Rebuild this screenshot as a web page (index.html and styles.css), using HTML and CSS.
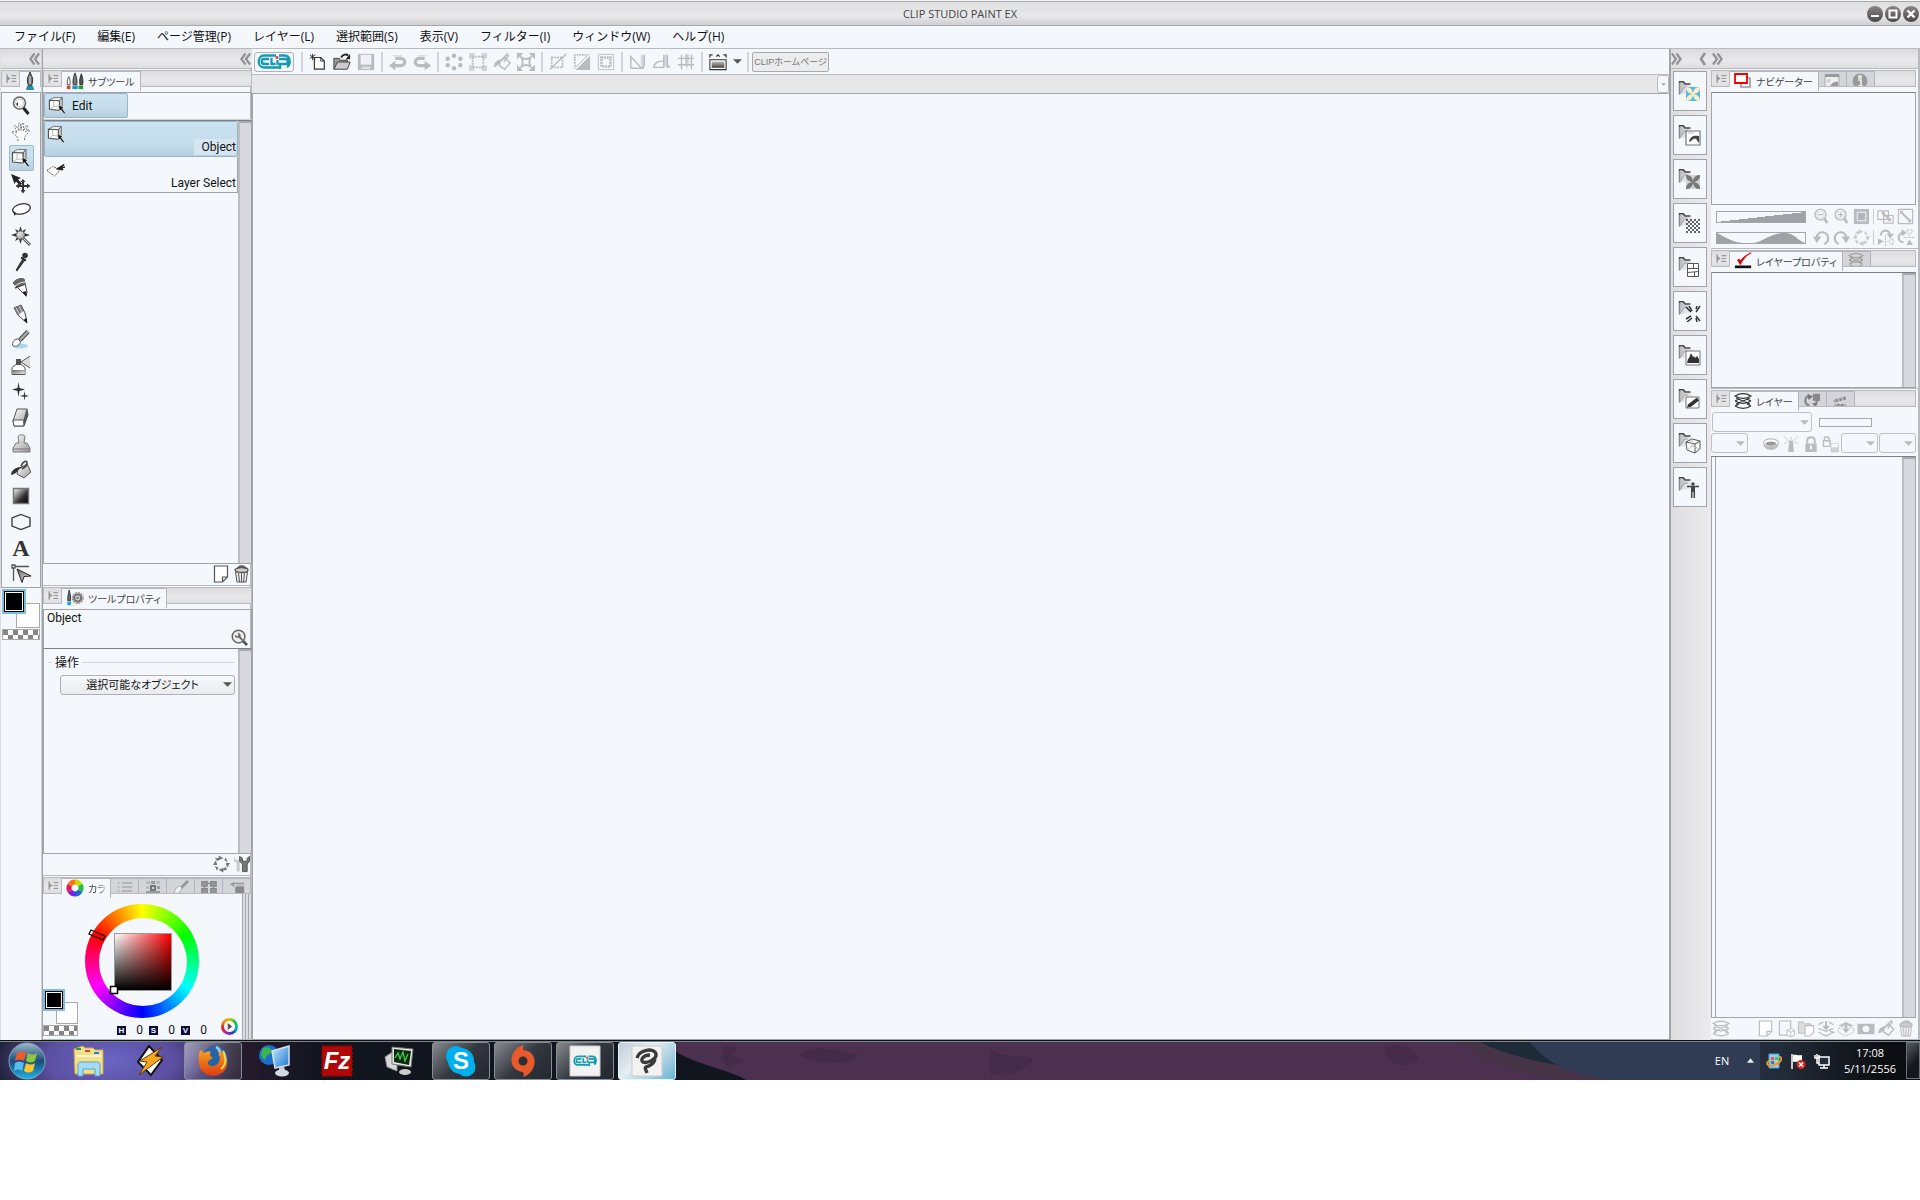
FILE: index.html
```html
<!DOCTYPE html>
<html lang="ja">
<head>
  <meta charset="UTF-8">
  <meta name="viewport" content="width=device-width, initial-scale=1.0">
  <title>CLIP STUDIO PAINT EX</title>
  <link rel="stylesheet" href="styles.css">
</head>
<body>
  <!-- Icon sprite -->
  <svg class="sprite" width="0" height="0">
    <defs>
      <linearGradient id="g-gray" x1="0" y1="0" x2="1" y2="1"><stop offset="0" stop-color="#666"/><stop offset="1" stop-color="#eee"/></linearGradient>
      <linearGradient id="g-light" x1="0" y1="0" x2="1" y2="1"><stop offset="0" stop-color="#fff"/><stop offset="1" stop-color="#999"/></linearGradient>
      <linearGradient id="g-dark" x1="0" y1="0" x2="1" y2="1"><stop offset="0" stop-color="#fff"/><stop offset=".6" stop-color="#332f2f"/><stop offset="1" stop-color="#000"/></linearGradient>
      <linearGradient id="g-window" x1="0" y1="0" x2="0" y2="1"><stop offset="0" stop-color="#bbb"/><stop offset="1" stop-color="#444"/></linearGradient>
      <linearGradient id="g-folder" x1="0" y1="0" x2="1" y2="0"><stop offset="0" stop-color="#b4b5b8"/><stop offset="1" stop-color="#f4f7fc"/></linearGradient>
      <linearGradient id="g-start" x1="0" y1="0" x2="0" y2="1"><stop offset="0" stop-color="#9fb9c8"/><stop offset=".5" stop-color="#1b4b78"/><stop offset="1" stop-color="#1fb6e8"/></linearGradient>
      <linearGradient id="g-fire" x1="0" y1="0" x2="0" y2="1"><stop offset="0" stop-color="#f7a21b"/><stop offset="1" stop-color="#dd3b14"/></linearGradient>
      <linearGradient id="g-screen" x1="0" y1="0" x2="1" y2="1"><stop offset="0" stop-color="#c8ecff"/><stop offset="1" stop-color="#1673cf"/></linearGradient>
    </defs>
    <symbol id="menu" viewBox="0 0 18 15"><path d="M5 4l4 3.500-4 3.500z" fill="#999"/><path d="M5.500 3v9M10 4.500h5M10 7.500h5M10 10.500h5" stroke="#999" stroke-width="1.300"/></symbol>
    <symbol id="collapse" viewBox="0 0 12 14"><path d="M6 1L1.500 7 6 13M11 1L6.500 7 11 13" fill="none" stroke="#929296" stroke-width="2.400"/></symbol>
    <symbol id="single" viewBox="0 0 7 14"><path d="M6 1L2 7l4 6" fill="none" stroke="#929296" stroke-width="2.600"/></symbol>
    <symbol id="down" viewBox="0 0 10 5"><path d="M0 0h10L5 5z" fill="currentColor"/></symbol>

    <symbol id="zoom" viewBox="0 0 20 20"><circle cx="8.500" cy="7" r="6" fill="#fff" stroke="#666" stroke-width="1.600"/><circle cx="8.500" cy="7" r="4" fill="none" stroke="#ccc"/><path d="M5 8l2-2v4z" fill="#333"/><path d="M12.500 12l5 6" stroke="#222" stroke-width="3"/></symbol>
    <symbol id="hand" viewBox="0 0 20 20"><path d="M7 19v-3C5 13 3 12 1 10.500c0-2 3-1 5 .500L3.500 4.500c0-1.500 1.500-1.500 2 0L8 9 7.500 2c.200-1.500 1.600-1.500 1.800 0L10 8.500 11 2c.400-1.500 1.800-1.300 1.700.300L12.500 9l2.700-5c1-1.200 2-.400 1.500.800L14.500 10l2.500-2c1.500-.500 2 .500 1 1.500L15 13c-.500 1.500-1.500 2-1.500 3v3" fill="#fff" stroke="#777" stroke-dasharray="2 1"/></symbol>
    <symbol id="object" viewBox="0 0 20 20"><path d="M1.500 4.500l5-3h8.500l-3 3.500z" fill="#eee" stroke="#777"/><path d="M12 5l3-3.500V12l-3 3z" fill="#ccc" stroke="#666"/><path d="M1.500 4.500L12 5v10l-10.500-1z" fill="#fff" stroke="#555" stroke-width="1.200"/><path d="M6 5v6l-4 3M6 11l6 .500" fill="none" stroke="#bbb"/><path d="M11 9l6 3.500-2 .700L18.500 18 17 19l-3.500-4.500-1.500 1.500z" fill="#111" stroke="#fff" stroke-width=".6"/></symbol>
    <symbol id="move" viewBox="0 0 20 20"><path d="M0 0l10 4-3 1.500 4 4-2 2-4-4L3.500 10z" fill="#222"/><path d="M12 5l2.500 3H13v3h3V9.500l3.500 2.500-3.500 2.500V13h-3v3h1.500L12 19.500 9.500 16H11v-3H8v1.500L4.500 12 8 9.500V11h3V8H9.500z" fill="#333"/></symbol>
    <symbol id="lasso" viewBox="0 0 20 20"><ellipse cx="10.500" cy="9" rx="9" ry="5" transform="rotate(-13 10 9)" fill="#fff" stroke="#333" stroke-width="1.300"/><path d="M2 12c2 0 3 2 1 3" fill="none" stroke="#333" stroke-width="1.700"/></symbol>
    <symbol id="wand" viewBox="0 0 20 20"><path d="M9.500 0l1.500 5 4-2-2 4 6 2-6 2 2 4-4-2-1.500 5L8 13l-4 2 2-4-6-2 6-2-2-4 4 2z" fill="#333"/><circle cx="9.500" cy="9" r="4" fill="url(#g-light)" stroke="#777"/><path d="M12 12l7 7" stroke="#555" stroke-width="2.600"/><path d="M12.500 12.500l6 6" stroke="#eee"/></symbol>
    <symbol id="dropper" viewBox="0 0 20 20"><path d="M12 7L5.500 18l.500.500L13.500 8" fill="#999" stroke="#333" stroke-width="1.400"/><path d="M10 5.500l5 3" stroke="#222" stroke-width="2"/><circle cx="14" cy="3.500" r="2.800" fill="#333"/></symbol>
    <symbol id="pen" viewBox="0 0 20 20"><path d="M2 5C5 1 9 0 13 1l3 13-1 4z" fill="#fff" stroke="#444"/><path d="M2 5C5 1 9 0 13 1l1 4-9 4z" fill="#666"/><path d="M4 8c4-3 7-4 10-4" stroke="#eee" fill="none"/><path d="M4 10l10-4" stroke="#444" stroke-width="1.500"/><path d="M11.500 14l4-1v6z" fill="#222"/></symbol>
    <symbol id="pencil" viewBox="0 0 20 20"><path d="M3 4l7-3 4 8 2 10-8-7z" fill="#fff" stroke="#444"/><path d="M3 4l7-3 3 6-7 4z" fill="#777"/><path d="M5 4l3 5M8 2l3 6" stroke="#ddd"/><path d="M12.500 16l3-2 .500 5z" fill="#111"/></symbol>
    <symbol id="brush" viewBox="0 0 20 20"><ellipse cx="9" cy="16" rx="8" ry="2.500" fill="#a9d4f8"/><path d="M17 1.500L9 10" stroke="#444" stroke-width="4.500"/><path d="M17 1.500L9 10" stroke="#aaa" stroke-width="2.500"/><path d="M7.500 9c-4 0-6 2-6 6 2 2 6 2 8-3z" fill="#fff" stroke="#555"/></symbol>
    <symbol id="airbrush" viewBox="0 0 20 20"><path d="M1 18.500v-7l4-3h5l4 3v7z" fill="#fff" stroke="#555"/><path d="M1.500 14h12v4h-12z" fill="url(#g-gray)"/><path d="M5 3h5v5H5z" fill="#555"/><path d="M19 0l-9 6 9 6" fill="#ddd" stroke="#555"/></symbol>
    <symbol id="sparkle" viewBox="0 0 20 20"><path d="M7.500 0l1 6 5.500 1.500L8.500 9l-1 6-1-6L1 7.500 6.500 6zM13.500 9l.700 4 4 1-4 .700-.700 4-.700-4-4-.700 4-1z" fill="#333"/></symbol>
    <symbol id="eraser" viewBox="0 0 20 20"><path d="M6 1h10l1 6-4 11H3l-1-5z" fill="url(#g-light)" stroke="#555"/><path d="M2 12h10l2 1-1.500 5H3z" fill="#fff" stroke="#555"/><path d="M15.500 1l1.500 6-4 11-1-4z" fill="#555"/></symbol>
    <symbol id="stamp" viewBox="0 0 20 20"><path d="M8 9L7 3c0-3 7-3 7 0l-1 6h3l3 5v4H2v-4l3-5z" fill="url(#g-light)" stroke="#777"/><path d="M2 15h17" stroke="#777"/></symbol>
    <symbol id="bucket" viewBox="0 0 20 20"><path d="M7 9l9-5 4 8-7 6-7-4z" fill="url(#g-light)" stroke="#555"/><path d="M9 7C3 8 0 11 0 15c4-.500 6-3 8-6l6-3" fill="#333"/><path d="M10 6c2-5 6-6 6-3s-3 5-5 6" fill="none" stroke="#444" stroke-width="1.600"/></symbol>
    <symbol id="gradient" viewBox="0 0 20 20"><path d="M2.500 2.500h15v15h-15z" fill="url(#g-dark)" stroke="#777" stroke-width="1.500"/></symbol>
    <symbol id="figure" viewBox="0 0 20 20"><path d="M10 2.500l9 3.500v8l-9 3.500L1 14V6z" fill="none" stroke="#333" stroke-width="1.300"/></symbol>
    <symbol id="ruler" viewBox="0 0 20 20"><path d="M1 1h3v3H1zM4 2.500h14M2.500 4v13" fill="none" stroke="#555" stroke-width="1.300"/><path d="M6 5l14 7-7 .500-2 6z" fill="url(#g-gray)" stroke="#222"/></symbol>
    <symbol id="layerselect" viewBox="0 0 20 20"><path d="M1 11l6-4 8 3-6 7z" fill="#fff" stroke="#555" stroke-dasharray="2 1"/><path d="M11 9.500l8-5-2 3h3l-3 1 1 2z" fill="#222" stroke="#222"/></symbol>

    <symbol id="nib" viewBox="0 0 14 18"><path d="M7 0c1 3 3.500 6 2.500 10l-1 4h-3l-1-4C3.500 6 6 3 7 0z" fill="#777" stroke="#333"/><path d="M7 4v8" stroke="#ddd"/><path d="M4 14h6l1 4H3z" fill="#1f8ea8"/></symbol>
    <symbol id="nibs" viewBox="0 0 20 18"><path d="M3 4c1 2 2 5 1.500 9h-3C1 9 2 6 3 4z" fill="#fff" stroke="#555"/><path d="M10 0c1 3 3 7 2 13H8C7 7 9 3 10 0z" fill="#777" stroke="#333"/><path d="M17 1c1 3 2.500 7 1.500 12h-3C14.500 8 16 4 17 1z" fill="#555" stroke="#222"/><path d="M1 14h4v4H1z" fill="#d84a20"/><path d="M7 14h6v4H7z" fill="#2196c8"/><path d="M14 14h5v4h-5z" fill="#2c9a28"/></symbol>
    <symbol id="gearnib" viewBox="0 0 20 18"><path d="M3.500 0c1 4 2 7 1.500 12H2C1.500 7 3 4 3.500 0z" fill="#666" stroke="#333"/><path d="M1.500 13h4v4h-4z" fill="#18a6e0"/><circle cx="13" cy="9" r="4" fill="#ddd" stroke="#777" stroke-width="2.600"/><circle cx="13" cy="9" r="6" fill="none" stroke="#888" stroke-width="1.400" stroke-dasharray="2 1.100"/><circle cx="13" cy="9" r="1.500" fill="#777"/></symbol>
    <symbol id="page" viewBox="0 0 16 18"><path d="M1 1h13v11l-5 5H1zM14 12H9v5" fill="#fff" stroke="currentColor" stroke-width="1.200"/></symbol>
    <symbol id="trash" viewBox="0 0 16 18"><path d="M2 7h12l-1.500 10h-9z" fill="#eee" stroke="currentColor"/><path d="M5 8l1 9M8 8v9M11 8l-1 9" stroke="currentColor"/><ellipse cx="8" cy="5" rx="6.500" ry="2.500" fill="#ccc" stroke="currentColor" stroke-width="1.300"/><path d="M4 4c0-4 8-4 8 0" fill="none" stroke="currentColor" stroke-width="1.300"/></symbol>
    <symbol id="wrenchlens" viewBox="0 0 18 18"><circle cx="8" cy="8" r="6.700" fill="#eee" stroke="#666" stroke-width="1.600"/><path d="M13 13l4 4" stroke="#555" stroke-width="3"/><path d="M4 6c0 3 3 4 4 3l5 5 1-1-4-5c1-2-1-4-3-4l1 2-1 2z" fill="#666"/></symbol>
    <symbol id="reset" viewBox="0 0 18 18"><path d="M6 0l5 3-5 2zM13 2l3 5-4-2zM18 8l-3 5-1.500-5zM15 15l-5 1 3-4zM11 18l-5-3 5-2zM4 16l-2-5 4 2zM0 10l3-5 1.500 5zM2 3l6-1-3 4z" fill="currentColor" opacity=".8"/></symbol>
    <symbol id="tools" viewBox="0 0 18 18"><path d="M1 1v5l3 2v9h3V8l1-2V1L6 5H3z" fill="#c8c8c8"/><path d="M7 1v5l3 3v8h5V9l2.500-3V1L15 3v3h-5V3z" fill="#777" stroke="#555"/></symbol>

    <symbol id="new" viewBox="0 0 20 20"><path d="M6 5h7l4 4v9H6z" fill="#fff" stroke="#333" stroke-width="1.300"/><path d="M13 5v4h4" fill="none" stroke="#333"/><path d="M4 1v7M1 2l6 5M1 6l6-4" stroke="#222"/></symbol>
    <symbol id="open" viewBox="0 0 20 20"><path d="M1 18V6h6l1 2h8v3" fill="#999" stroke="#333"/><path d="M1 18l4-8h14l-3 8z" fill="#ccc" stroke="#333"/><path d="M9 5c2-4 6-4 8-2" fill="none" stroke="#222" stroke-width="2"/><path d="M19 1v6h-5z" fill="#222"/></symbol>
    <symbol id="save" viewBox="0 0 20 20"><path d="M1 1h18v18H1z" fill="#b9babd"/><path d="M4 2h12v11H4z" fill="#eef0f4"/><path d="M5 15h10v3H5z" fill="#ddd"/></symbol>
    <symbol id="undo" viewBox="0 0 20 20"><path d="M4 14h9c6 0 6-8 0-8H7" fill="none" stroke="currentColor" stroke-width="3.500"/><path d="M0 14l7-5.500v11z" fill="currentColor"/><path d="M5 3h9" stroke="currentColor" stroke-dasharray="1.500 1"/></symbol>
    <symbol id="dots" viewBox="0 0 20 20"><g fill="currentColor"><circle cx="10" cy="3" r="2.500"/><circle cx="10" cy="17" r="2.500"/><circle cx="3" cy="6.500" r="2.500"/><circle cx="17" cy="6.500" r="2.500"/><circle cx="3" cy="13.500" r="2.500"/><circle cx="17" cy="13.500" r="2.500"/></g></symbol>
    <symbol id="frame" viewBox="0 0 20 20"><path d="M4 4h12v12H4z" fill="none" stroke="currentColor" stroke-width="2" stroke-dasharray="2 1"/><path d="M0 0h6v6H0zM14 0h6v6h-6zM0 14h6v6H0zM14 14h6v6h-6z" fill="currentColor" opacity=".6"/></symbol>
    <symbol id="fill" viewBox="0 0 20 20"><path d="M8 9l5-4 6 6-6 7-6-4z" fill="none" stroke="currentColor" stroke-width="1.600"/><path d="M9 7c-5 1-8 4-8 9 4-1 6-4 8-7l5-3z" fill="currentColor"/><path d="M10 7l6-6 1 2-5 7" fill="none" stroke="currentColor" stroke-width="1.600"/></symbol>
    <symbol id="scale" viewBox="0 0 20 20"><path d="M5 5c3 2 7 2 10 0-2 4-2 6 0 10-3-2-7-2-10 0 2-4 2-6 0-10z" fill="none" stroke="currentColor" stroke-width="2"/><path d="M0 0h7L0 7zM20 0v7l-7-7zM0 20v-7l7 7zM20 20h-7l7-7z" fill="currentColor"/></symbol>
    <symbol id="desel" viewBox="0 0 20 20"><path d="M3 5h12v11H3z" fill="none" stroke="currentColor" stroke-width="2" stroke-dasharray="2 1"/><path d="M1 18L19 1" stroke="currentColor" stroke-width="1.600"/></symbol>
    <symbol id="invert" viewBox="0 0 20 20"><path d="M19 3v16H3z" fill="currentColor"/><path d="M2 15V2h14" fill="none" stroke="currentColor" stroke-width="2" stroke-dasharray="2 1"/><path d="M1 18L18 1" stroke="currentColor"/></symbol>
    <symbol id="selborder" viewBox="0 0 20 20"><path d="M1.500 1.500h17v17h-17z" fill="none" stroke="currentColor"/><path d="M5 5h10v10H5z" fill="none" stroke="currentColor" stroke-width="3" stroke-dasharray="2 1"/></symbol>
    <symbol id="snap1" viewBox="0 0 20 20"><path d="M2 17V4l12 13H2M17 2v11l-2 5" fill="none" stroke="currentColor" stroke-width="1.600"/><path d="M13 2h4v10l-2 5-2-4z" fill="currentColor" opacity=".5"/></symbol>
    <symbol id="snap2" viewBox="0 0 20 20"><path d="M1 16c0-4 4-7 8-7h3v7zM16 17V2M12 2v8" fill="none" stroke="currentColor" stroke-width="1.600"/><path d="M12 2h4v10l-2 4-2-4z" fill="currentColor" opacity=".5"/><path d="M16 15h3" stroke="currentColor" stroke-width="2"/></symbol>
    <symbol id="snap3" viewBox="0 0 20 20"><path d="M1 6h18M1 13h18M5 2v16M16 2v16" stroke="currentColor" stroke-width="1.500"/><path d="M9 1h4v10l-2 7-2-7z" fill="currentColor" opacity=".7"/></symbol>
    <symbol id="panels" viewBox="0 0 20 20"><path d="M1 5V2h3M16 2h3v3M8 4l2-2 2 2" fill="none" stroke="#333" stroke-width="1.400"/><path d="M1 7.500h18v11H1z" fill="#fff" stroke="#333" stroke-width="1.200"/><path d="M3 9.500h14v7H3z" fill="url(#g-window)"/></symbol>
    <symbol id="clip" viewBox="0 0 34 16"><g fill="none" stroke="#149bb0" stroke-width="2.300"><path d="M19 1.500H7c-7 0-7 12 0 12h15M12 5H7c-3 0-3 5 0 5h5M14.500 4v6h4M22 5h6c4 0 4 5 0 5h-5v5M22 1.500h5c7 0 7 9 3 11.500M20.500 6v5"/></g><circle cx="20" cy="3.500" r="1.500" fill="#e33"/></symbol>

    <symbol id="layers" viewBox="0 0 18 16"><path d="M1 3c5-3 11-3 16 0-5 3-11 3-16 0zM1 8l4-2M17 8l-4-2M1 8c5 3 11 3 16 0M1 13l4-2M17 13l-4-2M1 13c5 3 11 3 16 0M2 5l14 6M16 5L2 11" fill="none" stroke="currentColor" stroke-width="1.200"/></symbol>
    <symbol id="navi" viewBox="0 0 18 16"><path d="M7 5h9v9H7z" fill="#fff" stroke="#999" stroke-width="1.600"/><path d="M1 1h12v9H1z" fill="#fff" stroke="#e00" stroke-width="1.800"/></symbol>
    <symbol id="check" viewBox="0 0 20 18"><path d="M1 14h18v3H1z" fill="#111"/><path d="M4 8l3 5C10 7 14 2 19 0c-5 2-9 5-12 9L6 7z" fill="#d00" stroke="#d00"/></symbol>
    <symbol id="subview" viewBox="0 0 16 14"><path d="M1 2h14v12H1z" fill="#eee" stroke="#aaa"/><path d="M1 1h14v3H1z" fill="#999"/><path d="M3 7h4M3 9h3" stroke="#bbb"/><path d="M6 14c1-4 5-6 8-5v5z" fill="#999"/></symbol>
    <symbol id="info" viewBox="0 0 16 14"><circle cx="8" cy="8" r="7.500" fill="#999"/><path d="M6 7h3v6M6 13h5M7 3h2v2H7z" stroke="#eee" stroke-width="1.600" fill="none"/></symbol>
    <symbol id="history" viewBox="0 0 18 14"><path d="M10 0h8v8h-8z" fill="#888"/><path d="M6 2C0 4 0 12 6 13M11 13c5-2 4-8 1-10" fill="none" stroke="#888" stroke-width="2.500"/><path d="M4 0l6 3-5 4zM9 11l5-1v4z" fill="#777"/></symbol>
    <symbol id="clapper" viewBox="0 0 16 14"><path d="M1 7l13-4v3L2 10zM2 11h12v3H2z" fill="#b0b1b5"/><path d="M4 6l1 3M8 5l1 3M12 4l1 3M5 14l2-3M9 14l2-3" stroke="#888" stroke-width="1.800"/></symbol>
    <symbol id="lines" viewBox="0 0 20 14"><path d="M1 2h2M1 7h2M1 12h2M6 2h13M6 7h13M6 12h13" stroke="#aaa" stroke-width="2"/></symbol>
    <symbol id="cset" viewBox="0 0 16 14"><path d="M1 1h4v3H1zM11 1h4v3h-4zM1 6h3v3H1z" fill="#bbb"/><path d="M6 1h4v3H6zM1 11h14v3H1zM12 6h3v3h-3z" fill="#999"/><path d="M6 6h4v4H6z" fill="none" stroke="#777" stroke-width="2"/></symbol>
    <symbol id="cmix" viewBox="0 0 16 14"><path d="M15 1l-7 7" stroke="#999" stroke-width="3"/><path d="M7 6c-3 0-5 3-6 7 3 1 7 0 8-5z" fill="#eee" stroke="#aaa"/></symbol>
    <symbol id="capp" viewBox="0 0 18 14"><path d="M1 1h6v5H1zM11 1h6v5h-6zM1 9h6v5H1zM11 9h6v5h-6zM6 3h6M14 5v5M4 5v5" fill="#999" stroke="#888" stroke-width="1.500"/></symbol>
    <symbol id="chist" viewBox="0 0 18 14"><path d="M1 4l5-3v6z" fill="#999"/><path d="M5 3h12M8 6h9" stroke="#999" stroke-width="1.600"/><path d="M7 7h10v7H7z" fill="#888"/></symbol>
    <symbol id="cwheel" viewBox="0 0 18 18"><g fill="none" stroke-width="5"><path d="M9 3a6 6 0 0 1 5.200 3" stroke="#c8d800"/><path d="M14.200 6a6 6 0 0 1 0 6" stroke="#20c040"/><path d="M14.200 12a6 6 0 0 1-5.200 3" stroke="#2060e0"/><path d="M9 15a6 6 0 0 1-5.200-3" stroke="#8020e0"/><path d="M3.800 12a6 6 0 0 1 0-6" stroke="#e81860"/><path d="M3.800 6A6 6 0 0 1 9 3" stroke="#ff7010"/></g></symbol>

    <symbol id="lens" viewBox="0 0 18 18"><circle cx="8" cy="7" r="5.800" fill="none" stroke="currentColor" stroke-width="1.500"/><circle cx="8" cy="7" r="3.800" fill="none" stroke="currentColor" opacity=".5"/><path d="M12 11l3 5" stroke="currentColor" stroke-width="3"/><path d="M5.500 7h5" stroke="currentColor" stroke-width="1.300"/></symbol>
    <symbol id="lensplus" viewBox="0 0 18 18"><use href="#lens"/><path d="M8 4.500v5" stroke="currentColor" stroke-width="1.300"/></symbol>
    <symbol id="fit" viewBox="0 0 18 18"><path d="M1 1h16v16H1z" fill="currentColor"/><path d="M4.500 4.500h9v9h-9z" fill="#b4b5b8" stroke="#f4f7fc"/></symbol>
    <symbol id="fitwin" viewBox="0 0 18 18"><path d="M1 3h11v9H1zM7 8h10v8H7z" fill="#fff" stroke="currentColor" stroke-width="1.300"/><path d="M6 5l8 8" stroke="currentColor" stroke-width="2"/><path d="M5 4h4L5 8zM15 14h-4l4-4z" fill="currentColor"/></symbol>
    <symbol id="full" viewBox="0 0 18 18"><path d="M1.500 1.500h15v15h-15z" fill="none" stroke="currentColor" stroke-width="1.200"/><path d="M5 5l8 8" stroke="currentColor" stroke-width="2"/><path d="M3 3h4L3 7zM15 15h-4l4-4z" fill="currentColor"/></symbol>
    <symbol id="rot" viewBox="0 0 18 18"><path d="M4 9c1-8 12-7 12 1 0 3-2 5-4 6" fill="none" stroke="currentColor" stroke-width="2.200"/><path d="M0 8h9l-5 7z" fill="currentColor"/></symbol>
    <symbol id="flip" viewBox="0 0 18 18"><path d="M4 7c0-7 10-7 10 0" fill="none" stroke="currentColor" stroke-width="2.200"/><path d="M10 5h8l-4 5zM1 10l6 3-6 4z" fill="currentColor"/><path d="M9 7v11M17 10l-6 3 6 4z" stroke="currentColor" stroke-dasharray="2 1" fill="none"/></symbol>
    <symbol id="ring" viewBox="0 0 18 18"><ellipse cx="9" cy="7" rx="8" ry="4" fill="#fff" stroke="currentColor" stroke-width="1.200"/><path d="M3 8c2-3 10-3 12 0-2 3-10 3-12 0z" fill="#999"/><path d="M1 8c0 9 16 9 16 0-3 5-13 5-16 0z" fill="currentColor"/></symbol>
    <symbol id="beacon" viewBox="0 0 18 18"><path d="M7 5h4l1 12H6z" fill="currentColor"/><path d="M9 1v4M2 1l5 4M16 1l-5 4M2 8l4-2M16 8l-4-2" stroke="currentColor" stroke-dasharray="1.500 1"/></symbol>
    <symbol id="lock" viewBox="0 0 18 18"><path d="M5 8V5c0-5 8-5 8 0v3" fill="none" stroke="currentColor" stroke-width="2"/><path d="M3 8h12v9H3z" fill="currentColor"/><path d="M9 10v4" stroke="#fff" stroke-width="2"/></symbol>
    <symbol id="locka" viewBox="0 0 18 18"><path d="M2 5V3c0-3 5-3 5 0v2M1 5h7v6H1z" fill="none" stroke="currentColor" stroke-width="1.500"/><path d="M9 8h4v4h4v5H9v-5h4V8z" fill="currentColor" opacity=".6"/><path d="M9 8h8v9H9z" fill="none" stroke="currentColor" opacity=".5"/></symbol>
    <symbol id="pagecube" viewBox="0 0 18 18"><path d="M2 1h12v10M2 1v15h9" fill="none" stroke="currentColor" stroke-width="1.200"/><path d="M10 11l4-2 4 2v5l-4 2-4-2zM10 11l4 2 4-2M14 13v5" fill="#fff" stroke="currentColor"/></symbol>
    <symbol id="foldpage" viewBox="0 0 18 18"><path d="M1 14V2h5l1 2h7v10z" fill="#ddd" stroke="currentColor"/><path d="M8 6h9v7l-4 4H8z" fill="#fff" stroke="currentColor" stroke-width="1.200"/></symbol>
    <symbol id="transfer" viewBox="0 0 18 18"><path d="M1 5l5-3M17 5l-5-3M1 9l8 3 8-3M1 13l8 4 8-4-4-1" fill="none" stroke="currentColor" stroke-width="1.300"/><path d="M9 1v7" stroke="currentColor" stroke-width="2"/><path d="M5 6h8l-4 5z" fill="currentColor"/></symbol>
    <symbol id="merge" viewBox="0 0 18 18"><path d="M1 6l8-4 8 4-3 1-5-2-5 2z" fill="currentColor"/><path d="M1 9l8-3 8 3v4l-8 4-8-4z" fill="none" stroke="currentColor" stroke-dasharray="2 1"/><path d="M9 5v6" stroke="currentColor" stroke-width="2"/><path d="M5 9h8l-4 5z" fill="currentColor"/></symbol>
    <symbol id="mask" viewBox="0 0 18 18"><path d="M0 4h18v11H0z" fill="currentColor"/><circle cx="9" cy="9.500" r="3.500" fill="#f4f7fc"/></symbol>

    <symbol id="folder" viewBox="0 0 18 18"><path d="M1 16V3h5l2 2h9l-3 8z" fill="url(#g-folder)"/><path d="M1.500 16V3.500" stroke="#777"/><path d="M1 3l1-1h4l2 2.500h6" fill="none" stroke="#444" stroke-width="1.800"/><path d="M1.500 16.500L8 8h9l-4 7z" fill="#e4e6ea" opacity=".8"/><path d="M1.500 16.500l6-8.500H11" fill="none" stroke="#999"/></symbol>
    <symbol id="b-color" viewBox="0 0 16 16"><path d="M1 1h14v14H1z" fill="#58b9ea"/><path d="M1 1c4 0 6 2 7 6 1-4 3-6 7-6 0 4-2 6-6 7 4 1 6 3 6 7-4 0-6-2-7-6-1 4-3 6-7 6 0-4 2-6 6-7-4-1-6-3-6-7z" fill="#fbeec0"/></symbol>
    <symbol id="b-mono" viewBox="0 0 16 16"><path d="M1 1h14v14H1z" fill="#d0d1d4"/><path d="M1 1c4 0 6 2 7 6 1-4 3-6 7-6 0 4-2 6-6 7 4 1 6 3 6 7-4 0-6-2-7-6-1 4-3 6-7 6 0-4 2-6 6-7-4-1-6-3-6-7z" fill="#777"/></symbol>
    <symbol id="b-image" viewBox="0 0 16 16"><path d="M1 1h14v14H1z" fill="#fff" stroke="#777" stroke-width="1.200"/><path d="M4 12c1-6 5-7 10-6v7l-3-4z" fill="#444"/><path d="M7 11c1-2 3-2 4-1" stroke="#eee" fill="none" stroke-width="1.500"/><path d="M3 3h6" stroke="#bbb"/></symbol>
    <symbol id="b-tone" viewBox="0 0 16 16"><path d="M1 2h14M1 6h14M1 10h14M1 14h14" stroke="#333" stroke-width="1.600" stroke-dasharray="2 2"/><path d="M3 4h12M3 8h12M3 12h12" stroke="#333" stroke-width="1.600" stroke-dasharray="2 2"/></symbol>
    <symbol id="b-koma" viewBox="0 0 16 16"><path d="M2.500 1.500h11v13h-11zM2.500 6.500h11M8.500 1.500v5M2.500 10.500l11-1M9.500 10v4.500" fill="#fff" stroke="#555"/></symbol>
    <symbol id="b-effect" viewBox="0 0 16 16"><path d="M1 1l5 5M4 0l3 5M15 0l-4 6M12 0l-1 3M1 13l5-3M2 16l5-4M15 15l-4-5M12 16l-1-4" stroke="#333" stroke-width="1.500"/></symbol>
    <symbol id="b-bg" viewBox="0 0 16 16"><path d="M1 1h14v14H1z" fill="#fff" stroke="#777"/><path d="M2 13l1-4 1-1 2-5 2 4 1-1 1 2 2-2 2 3v4z" fill="#333"/></symbol>
    <symbol id="b-pen" viewBox="0 0 16 16"><path d="M1 3h13v11H1z" fill="#fff" stroke="#777"/><path d="M4 12l9-7" stroke="#333" stroke-width="3.500"/><path d="M2 14l1-4 3 2z" fill="#333"/></symbol>
    <symbol id="b-cube" viewBox="0 0 16 16"><path d="M1 4l6-3 8 2v8l-5 4-8-3z" fill="#fff" stroke="#555"/><path d="M1 4l9 2 5-3M10 6v9" fill="none" stroke="#555"/><path d="M7 1v7l-5 4M7 8l8 3" fill="none" stroke="#bbb"/></symbol>
    <symbol id="b-man" viewBox="0 0 16 16"><circle cx="8" cy="2" r="1.700" fill="#444"/><path d="M2 4.500h12M6.700 9v7M9.300 9v7" stroke="#444" stroke-width="1.500"/><path d="M6 4h4v6H6z" fill="#444"/></symbol>
  </svg>

  <div class="desktop">
    <header class="titlebar">
      <h1>CLIP STUDIO PAINT EX</h1>
      <div class="window-buttons">
        <button aria-label="最小化"><svg viewBox="0 0 16 16"><path d="M4 10h8" stroke="#fff" stroke-width="2"/></svg></button>
        <button aria-label="最大化"><svg viewBox="0 0 16 16"><path d="M4.500 4.500h7v7h-7z" fill="none" stroke="#fff" stroke-width="2"/></svg></button>
        <button aria-label="閉じる"><svg viewBox="0 0 16 16"><path d="M4.500 4.500l7 7M11.500 4.500l-7 7" stroke="#fff" stroke-width="2.400"/></svg></button>
      </div>
    </header>

    <nav class="menubar">
      <button>ファイル(F)</button>
      <button>編集(E)</button>
      <button>ページ管理(P)</button>
      <button>レイヤー(L)</button>
      <button>選択範囲(S)</button>
      <button>表示(V)</button>
      <button>フィルター(I)</button>
      <button>ウィンドウ(W)</button>
      <button>ヘルプ(H)</button>
    </nav>

    <div class="workspace">
      <!-- Tools -->
      <aside class="toolbox">
        <div class="dock-head right"><svg class="chev"><use href="#collapse"/></svg></div>
        <div class="tabs">
          <button class="tab-menu" aria-label="メニュー"><svg><use href="#menu"/></svg></button>
          <button class="tab active icon-only" aria-label="ツール"><svg><use href="#nib"/></svg></button>
        </div>
        <div class="tool-list">
          <button aria-label="虫めがね"><svg><use href="#zoom"/></svg></button>
          <button aria-label="移動"><svg><use href="#hand"/></svg></button>
          <button class="selected" aria-label="操作"><svg><use href="#object"/></svg></button>
          <button aria-label="レイヤー移動"><svg><use href="#move"/></svg></button>
          <button aria-label="選択範囲"><svg><use href="#lasso"/></svg></button>
          <button aria-label="自動選択"><svg><use href="#wand"/></svg></button>
          <button aria-label="スポイト"><svg><use href="#dropper"/></svg></button>
          <button aria-label="ペン"><svg><use href="#pen"/></svg></button>
          <button aria-label="鉛筆"><svg><use href="#pencil"/></svg></button>
          <button aria-label="筆"><svg><use href="#brush"/></svg></button>
          <button aria-label="エアブラシ"><svg><use href="#airbrush"/></svg></button>
          <button aria-label="デコレーション"><svg><use href="#sparkle"/></svg></button>
          <button aria-label="消しゴム"><svg><use href="#eraser"/></svg></button>
          <button aria-label="色混ぜ"><svg><use href="#stamp"/></svg></button>
          <button aria-label="塗りつぶし"><svg><use href="#bucket"/></svg></button>
          <button aria-label="グラデーション"><svg><use href="#gradient"/></svg></button>
          <button aria-label="図形"><svg><use href="#figure"/></svg></button>
          <button class="letter">A</button>
          <button aria-label="定規"><svg><use href="#ruler"/></svg></button>
        </div>
        <div class="swatches">
          <button class="sub" aria-label="サブカラー"></button>
          <button class="main" aria-label="メインカラー"></button>
          <button class="clear" aria-label="透明色"></button>
        </div>
      </aside>

      <!-- Left dock -->
      <aside class="dock left-dock">
        <div class="dock-head right"><svg class="chev"><use href="#collapse"/></svg></div>

        <section class="panel subtool">
          <div class="tabs">
            <button class="tab-menu" aria-label="メニュー"><svg><use href="#menu"/></svg></button>
            <button class="tab active"><svg><use href="#nibs"/></svg>サブツール</button>
          </div>
          <div class="group-row">
            <button class="group"><svg><use href="#object"/></svg>Edit</button>
          </div>
          <div class="scroll-box">
            <div class="rows">
              <button class="row selected"><svg><use href="#object"/></svg><span>Object</span></button>
              <button class="row"><svg><use href="#layerselect"/></svg><span>Layer Select</span></button>
            </div>
            <div class="scrollbar"></div>
          </div>
          <div class="panel-foot">
            <button aria-label="複製"><svg><use href="#page"/></svg></button>
            <button aria-label="削除"><svg><use href="#trash"/></svg></button>
          </div>
        </section>

        <section class="panel toolprop">
          <div class="tabs">
            <button class="tab-menu" aria-label="メニュー"><svg><use href="#menu"/></svg></button>
            <button class="tab active"><svg><use href="#gearnib"/></svg>ツールプロパティ</button>
          </div>
          <div class="prop-name">Object<button aria-label="詳細"><svg><use href="#wrenchlens"/></svg></button></div>
          <div class="scroll-box">
            <div class="rows">
              <fieldset>
                <legend>操作</legend>
                <div class="combo">
                  <select aria-label="選択可能なオブジェクト"><option>選択可能なオブジェクト</option></select>
                  <svg><use href="#down"/></svg>
                </div>
              </fieldset>
            </div>
            <div class="scrollbar"></div>
          </div>
          <div class="panel-foot">
            <button aria-label="初期設定"><svg><use href="#reset"/></svg></button>
            <button aria-label="サブツール詳細"><svg><use href="#tools"/></svg></button>
          </div>
        </section>

        <section class="panel color">
          <div class="tabs">
            <button class="tab-menu" aria-label="メニュー"><svg><use href="#menu"/></svg></button>
            <button class="tab active faded"><svg><use href="#cwheel"/></svg><span>カラ</span></button>
            <button class="tab" aria-label="スライダー"><svg><use href="#lines"/></svg></button>
            <button class="tab" aria-label="カラーセット"><svg><use href="#cset"/></svg></button>
            <button class="tab" aria-label="混色"><svg><use href="#cmix"/></svg></button>
            <button class="tab" aria-label="近似色"><svg><use href="#capp"/></svg></button>
            <button class="tab" aria-label="履歴"><svg><use href="#chist"/></svg></button>
          </div>
          <div class="color-body">
            <div class="color-area">
              <div class="wheel">
                <div class="hole"><div class="sv"></div></div>
                <svg viewBox="0 0 116 116"><path d="M6 26l14 6-2 4L4 30z" fill="none" stroke="#000" stroke-width="1.200"/><path d="M25.500 82.500h7v7h-7z" fill="#fff" stroke="#000" stroke-width="1.500"/></svg>
              </div>
              <div class="color-bottom">
                <div class="swatches small">
                  <button class="sub" aria-label="サブカラー"></button>
                  <button class="main" aria-label="メインカラー"></button>
                  <button class="clear" aria-label="透明色"></button>
                </div>
                <div class="hsv">
                  <label><b>H</b><input value="0"></label>
                  <label><b>S</b><input value="0"></label>
                  <label><b>V</b><input value="0"></label>
                </div>
                <button class="mode" aria-label="HSV"><svg viewBox="0 0 10 10"><path d="M3 1l5 4-5 4z" fill="#744"/></svg></button>
              </div>
            </div>
            <div class="grip"></div>
          </div>
        </section>
      </aside>

      <!-- Canvas -->
      <main>
        <div class="commandbar">
          <button class="clip-btn" aria-label="CLIP STUDIO"><svg><use href="#clip"/></svg></button>
          <i></i>
          <button aria-label="新規"><svg><use href="#new"/></svg></button>
          <button aria-label="開く"><svg><use href="#open"/></svg></button>
          <button aria-label="保存"><svg><use href="#save"/></svg></button>
          <i></i>
          <button aria-label="取り消し"><svg><use href="#undo"/></svg></button>
          <button class="mirror" aria-label="やり直し"><svg><use href="#undo"/></svg></button>
          <i></i>
          <button aria-label="消去"><svg><use href="#dots"/></svg></button>
          <button aria-label="選択範囲外を消去"><svg><use href="#frame"/></svg></button>
          <button aria-label="塗りつぶし"><svg><use href="#fill"/></svg></button>
          <button aria-label="拡大・縮小・回転"><svg><use href="#scale"/></svg></button>
          <i></i>
          <button aria-label="選択を解除"><svg><use href="#desel"/></svg></button>
          <button aria-label="選択範囲を反転"><svg><use href="#invert"/></svg></button>
          <button aria-label="境界線を表示"><svg><use href="#selborder"/></svg></button>
          <i></i>
          <button aria-label="定規にスナップ"><svg><use href="#snap1"/></svg></button>
          <button aria-label="特殊定規にスナップ"><svg><use href="#snap2"/></svg></button>
          <button aria-label="グリッドにスナップ"><svg><use href="#snap3"/></svg></button>
          <i></i>
          <button aria-label="パレット"><svg><use href="#panels"/></svg></button>
          <button class="drop" aria-label="一覧"><svg><use href="#down"/></svg></button>
          <i></i>
          <button class="home">CLIPホームページ</button>
        </div>
        <div class="doc-tabs"><button aria-label="一覧"><svg><use href="#down"/></svg></button></div>
        <div class="canvas"></div>
      </main>

      <!-- Materials -->
      <aside class="materials">
        <div class="dock-head"><svg class="chev flip"><use href="#collapse"/></svg><svg class="chev one"><use href="#single"/></svg></div>
        <div class="material-list">
          <button aria-label="カラーパターン"><svg><use href="#folder"/></svg><svg class="badge"><use href="#b-color"/></svg></button>
          <button aria-label="画像"><svg><use href="#folder"/></svg><svg class="badge"><use href="#b-image"/></svg></button>
          <button aria-label="単色パターン"><svg><use href="#folder"/></svg><svg class="badge"><use href="#b-mono"/></svg></button>
          <button aria-label="トーン"><svg><use href="#folder"/></svg><svg class="badge"><use href="#b-tone"/></svg></button>
          <button aria-label="コマ"><svg><use href="#folder"/></svg><svg class="badge"><use href="#b-koma"/></svg></button>
          <button aria-label="効果線"><svg><use href="#folder"/></svg><svg class="badge"><use href="#b-effect"/></svg></button>
          <button aria-label="背景"><svg><use href="#folder"/></svg><svg class="badge"><use href="#b-bg"/></svg></button>
          <button aria-label="ブラシ"><svg><use href="#folder"/></svg><svg class="badge"><use href="#b-pen"/></svg></button>
          <button aria-label="3D"><svg><use href="#folder"/></svg><svg class="badge"><use href="#b-cube"/></svg></button>
          <button aria-label="ポーズ"><svg><use href="#folder"/></svg><svg class="badge"><use href="#b-man"/></svg></button>
        </div>
      </aside>

      <!-- Right dock -->
      <aside class="dock right-dock">
        <div class="dock-head"><svg class="chev flip"><use href="#collapse"/></svg></div>

        <section class="panel navigator">
          <div class="tabs">
            <button class="tab-menu" aria-label="メニュー"><svg><use href="#menu"/></svg></button>
            <button class="tab active"><svg><use href="#navi"/></svg>ナビゲーター</button>
            <button class="tab" aria-label="サブビュー"><svg><use href="#subview"/></svg></button>
            <button class="tab" aria-label="情報"><svg><use href="#info"/></svg></button>
          </div>
          <div class="preview"></div>
          <div class="nav-controls">
            <input class="zoom-range" type="range" aria-label="拡大率">
            <button aria-label="縮小"><svg><use href="#lens"/></svg></button>
            <button aria-label="拡大"><svg><use href="#lensplus"/></svg></button>
            <button aria-label="100%"><svg><use href="#fit"/></svg></button>
            <i></i>
            <button aria-label="フィッティング"><svg><use href="#fitwin"/></svg></button>
            <button aria-label="全体表示"><svg><use href="#full"/></svg></button>
            <div class="angle">
              <svg viewBox="0 0 90 13" preserveAspectRatio="none"><path d="M0 0c12 8 18 13 28 13h10C50 9 56 0 68 0s12 8 22 13H0z" fill="#9ea1a6"/></svg>
              <input type="range" aria-label="角度">
            </div>
            <button aria-label="左回転"><svg><use href="#rot"/></svg></button>
            <button class="mirror" aria-label="右回転"><svg><use href="#rot"/></svg></button>
            <button aria-label="回転リセット"><svg><use href="#reset"/></svg></button>
            <i></i>
            <button aria-label="左右反転"><svg><use href="#flip"/></svg></button>
            <button class="turn" aria-label="上下反転"><svg><use href="#flip"/></svg></button>
          </div>
        </section>

        <section class="panel layerprop">
          <div class="tabs">
            <button class="tab-menu" aria-label="メニュー"><svg><use href="#menu"/></svg></button>
            <button class="tab active"><svg><use href="#check"/></svg>レイヤープロパティ</button>
            <button class="tab" aria-label="レイヤー検索"><svg><use href="#layers"/></svg></button>
          </div>
          <div class="scroll-box">
            <div class="rows"></div>
            <div class="scrollbar"></div>
          </div>
        </section>

        <section class="panel layer">
          <div class="tabs">
            <button class="tab-menu" aria-label="メニュー"><svg><use href="#menu"/></svg></button>
            <button class="tab active dark"><svg><use href="#layers"/></svg>レイヤー</button>
            <button class="tab" aria-label="ヒストリー"><svg><use href="#history"/></svg></button>
            <button class="tab" aria-label="オートアクション"><svg><use href="#clapper"/></svg></button>
          </div>
          <div class="blend">
            <div class="combo wide"><select aria-label="合成モード"></select><svg><use href="#down"/></svg></div>
            <input class="opacity" type="range" aria-label="不透明度">
          </div>
          <div class="layer-opts">
            <div class="combo"><select aria-label="パレットカラー"></select><svg><use href="#down"/></svg></div>
            <div class="opts">
              <button aria-label="クリッピング"><svg><use href="#ring"/></svg></button>
              <button aria-label="参照レイヤー"><svg><use href="#beacon"/></svg></button>
              <button aria-label="ロック"><svg><use href="#lock"/></svg></button>
              <button aria-label="透明ピクセルをロック"><svg><use href="#locka"/></svg></button>
            </div>
            <div class="combo"><select aria-label="マスク"></select><svg><use href="#down"/></svg></div>
            <div class="combo"><select aria-label="定規の範囲"></select><svg><use href="#down"/></svg></div>
          </div>
          <div class="scroll-box layers-box">
            <div class="rows"></div>
            <div class="scrollbar"></div>
          </div>
          <div class="layer-foot">
            <button aria-label="2ペイン"><svg><use href="#layers"/></svg></button>
            <button aria-label="新規レイヤー"><svg><use href="#page"/></svg></button>
            <button aria-label="新規レイヤー設定"><svg><use href="#pagecube"/></svg></button>
            <button aria-label="新規フォルダー"><svg><use href="#foldpage"/></svg></button>
            <button aria-label="転写"><svg><use href="#transfer"/></svg></button>
            <button aria-label="結合"><svg><use href="#merge"/></svg></button>
            <button aria-label="レイヤーマスク"><svg><use href="#mask"/></svg></button>
            <button aria-label="マスクを適用"><svg><use href="#fill"/></svg></button>
            <button aria-label="レイヤーを削除"><svg><use href="#trash"/></svg></button>
          </div>
        </section>
      </aside>
    </div>

    <!-- Taskbar -->
    <footer class="taskbar">
      <svg class="wall" viewBox="0 0 1920 40" preserveAspectRatio="none">
        <path d="M676 0H1540c30 12 50 28 62 40H746c-14-10-50-16-70-30z" fill="#4b3050"/>
        <path d="M1460 0h60c20 14 50 28 90 40h-60c-40-10-70-20-90-40z" fill="#463347"/>
        <path d="M1480 0h60c10 14 30 24 50 30-40-6-80-14-110-30z" fill="#1e2a38"/>
        <path d="M1530 0h230v40h-150c-50-8-66-22-80-40z" fill="#2f3c54"/>
        <path d="M725 4l12 2-6 8 12 6-14 8 8 10-16-20zM800 14c10-10 30-8 60 0-14 10-40 12-60 0zM990 8c14 10 28 4 44 10-10 10-20 18-44 16zM1385 6c20-8 30 4 34 12-14 12-34 6-34-12z" fill="#452b4a"/>
      </svg>
      <button class="start" aria-label="スタート">
        <svg viewBox="0 0 38 38"><circle cx="19" cy="19" r="18" fill="url(#g-start)" stroke="#7fa6c0"/><path d="M9 11c3-2 6-2 9 0l-2 8c-3-2-6-2-9 0z" fill="#f0592b"/><path d="M20 11c3 2 6 2 9 0l-2 8c-3 2-6 2-9 0z" fill="#8cc63e"/><path d="M7 21c3-2 6-2 9 0l-2 8c-3-2-5-2-8 0z" fill="#5cbcf2"/><path d="M18 21c3 2 6 2 9 0l-2 8c-3 2-6 2-9 0z" fill="#fcc62d"/></svg>
      </button>
      <div class="tasks">
        <button aria-label="Explorer"><svg viewBox="0 0 32 32"><path d="M1 4l9-3 2 2h8l2 2h8v24H2z" fill="#f4df8c" stroke="#c9a94a"/><path d="M3 3h5v2H3z" fill="#2d9a3b"/><path d="M12 5h5v2h-5z" fill="#d4442c"/><path d="M21 7h5v2h-5z" fill="#2b7dd4"/><path d="M3 11h26" stroke="#fff6c8" stroke-width="2"/><path d="M5 31V20c0-2 1-3 3-3h16c2 0 3 1 3 3v11h-5v-7H10v7z" fill="#a5dcf4" stroke="#4ea4cc"/></svg></button>
        <button aria-label="Winamp"><svg viewBox="0 0 32 32"><path d="M14 1l13 14-11 15L3 17z" fill="#fff" stroke="#111" stroke-width="2"/><path d="M27 2L5 16l7 1-8 13 24-18-8-1z" fill="#f9a51f" stroke="#5a3605"/></svg></button>
        <button class="open" aria-label="Firefox"><svg viewBox="0 0 32 32"><circle cx="18" cy="14" r="13" fill="#2463a8"/><path d="M19 2c4 2 5 6 4 9" stroke="#7fd0f5" stroke-width="3" fill="none"/><path d="M3 5c2 1 3 2 4 3 3-2 6-2 7-1-2 2-1 4 2 6-3 2-6 3-5 6 2 3 8 3 11-2 2-5 0-9-2-12 9 3 12 11 9 18-4 9-18 11-25 2C1 19 1 11 3 5z" fill="url(#g-fire)"/><path d="M26 6c4 7 3 14-2 18" fill="none" stroke="#fbd34b" stroke-width="2"/></svg></button>
        <button aria-label="Network"><svg viewBox="0 0 32 32"><circle cx="10" cy="10" r="10" fill="#1c6fd0"/><path d="M4 3c5-2 9 0 8 4s-5 2-5 6-4 0-5-3z" fill="#3db548"/><path d="M13 6l17-5v19l-14 3z" fill="url(#g-screen)" stroke="#d4e4ee" stroke-width="1.500"/><path d="M20 22l5-1 1 5h-6z" fill="#ccd"/><ellipse cx="23" cy="28" rx="7" ry="3.500" fill="#d5d9e6"/></svg></button>
        <button class="fz" aria-label="FileZilla"><svg viewBox="0 0 32 32"><path d="M1 1h30v30H1z" fill="#b00808" stroke="#8f0000" stroke-width="2" stroke-dasharray="2 2"/></svg><b>Fz</b></button>
        <button aria-label="Monitor"><svg viewBox="0 0 32 32"><path d="M2 12l12-8v22l-10-4z" fill="#d6d9d4" stroke="#888"/><path d="M9 2l21 2-2 18-19-3z" fill="#e6e8e4" stroke="#777"/><path d="M11 4l17 2-2 14-15-3z" fill="#0a2a10"/><path d="M12 13l3-5 2 6 3-7 2 9 3-7" fill="none" stroke="#3fd04c" stroke-width="1.300"/><ellipse cx="22" cy="27" rx="6" ry="3" fill="#ccc"/></svg></button>
        <button class="open" aria-label="Skype"><svg viewBox="0 0 32 32"><circle cx="11" cy="11" r="10" fill="#00aff0"/><circle cx="21" cy="22" r="9.500" fill="#00aff0"/><circle cx="16" cy="16" r="13" fill="#00aff0"/></svg><b>S</b></button>
        <button class="open" aria-label="Origin"><svg viewBox="0 0 32 32"><path d="M17 0c-1 2-1 3-1 5 16 1 15 22 0 27 1-2 1-3 0-5C-1 25 2 3 17 0z" fill="#e8592b"/><circle cx="16" cy="16" r="4.500" fill="#2c2f33"/></svg></button>
        <button class="open" aria-label="CLIP STUDIO"><svg viewBox="0 0 32 32"><path d="M1 1h30v30H1z" fill="#f2f2f2" stroke="#ccc"/><use href="#clip" x="4" y="10" width="24" height="12"/></svg></button>
        <button class="open current" aria-label="CLIP STUDIO PAINT"><svg viewBox="0 0 32 32"><path d="M1 1h30v30H1z" fill="#f2f2f2" stroke="#ccc"/><path d="M19 10c-7 0-10 5-7 7 4 2 14-3 13-8-2-7-17-4-19 4M24 14c-1 4-5 7-9 8-2 1 0 3 1 6" fill="none" stroke="#3a3a3a" stroke-width="3.400"/></svg></button>
      </div>
      <div class="tray">
        <button class="lang">EN</button>
        <button aria-label="隠れているインジケーター"><svg class="up" viewBox="0 0 8 5"><path d="M0 5h8L4 0z" fill="#e8eaee"/></svg></button>
        <button aria-label="Update"><svg viewBox="0 0 16 16"><path d="M3 1h10v14H3z" fill="#8fd0f4" stroke="#4f9fd0"/><path d="M5 4h3v3H5z" fill="#e55"/><path d="M9 4h3v3H9z" fill="#5b5"/><path d="M5 8h3v3H5z" fill="#37c"/><path d="M9 8h3v3H9z" fill="#fc3"/><path d="M13 4c5 0 2 6-5 8-7 2-9-2-4-5" fill="none" stroke="#e8962c" stroke-width="2"/></svg></button>
        <button aria-label="Action Center"><svg viewBox="0 0 16 16"><path d="M2 1v15" stroke="#fff" stroke-width="1.500"/><path d="M3 2c3-1 4 1 9 0v7c-4 1-6-1-9 0z" fill="#fff"/><circle cx="11" cy="11.500" r="4.500" fill="#d8271c"/><path d="M9 9.500l4 4M13 9.500l-4 4" stroke="#fff" stroke-width="1.500"/></svg></button>
        <button aria-label="Network"><svg viewBox="0 0 16 16"><path d="M5 4h10v8H5z" fill="#222c3c" stroke="#fff" stroke-width="1.500"/><path d="M6 15h8M10 12v3M3 1v9h2M1 2v3h4V2" fill="none" stroke="#fff" stroke-width="1.500"/></svg></button>
        <div class="clock"><time>17:08</time><span>5/11/2556</span></div>
        <button class="show-desktop" aria-label="デスクトップの表示"></button>
      </div>
    </footer>
  </div>
</body>
</html>
```
FILE: styles.css
```css
/* ***** Base ***** */
:root {
  --bg: #f4f7fc;
  --line: #a0a3aa;
  --soft-line: #b9babe;
  --bar: linear-gradient(#dcdcde, #e9e9eb 60%, #dedee0);
  --select: linear-gradient(#cbe3f1, #c6deec 60%, #b4cfdf);
  --dim: #babbbf;
}

* {
  box-sizing: border-box;
}

body {
  margin: 0;
  background: #fff;
  color: #111;
  font: 12px/16px "Open Sans", "Noto Sans CJK JP", sans-serif;
}

button, input, select {
  margin: 0;
  padding: 0;
  border: 0;
  background: none;
  color: inherit;
  font: inherit;
}

svg {
  display: block;
  flex: none;
}

.sprite {
  position: absolute;
}

.mirror svg {
  transform: scaleX(-1);
}

.turn svg {
  transform: rotate(-90deg);
}

.desktop {
  display: flex;
  flex-direction: column;
  height: 90vh;
  background: var(--bg);
}

/* ***** Title and menus ***** */
.titlebar {
  display: grid;
  grid-template-columns: 1fr auto 1fr;
  align-items: center;
  height: 25px;
  margin-top: 1px;
  border: 1px solid #a9a9ac;
  border-left: 0;
  border-right: 0;
  background: linear-gradient(#dededf, #e9e9eb 60%, #cfcfd1);
}

.titlebar h1 {
  grid-column: 2;
  margin: 0;
  color: #444;
  font-size: 11px;
  font-weight: normal;
}

.window-buttons {
  display: flex;
  gap: 2px;
  justify-content: flex-end;
  padding-right: 1px;
}

.window-buttons button {
  width: 16px;
  height: 16px;
  border-radius: 50%;
  background: linear-gradient(#8a8585, #4d4747);
}

.menubar {
  display: flex;
  gap: 22px;
  height: 23px;
  padding-left: 14px;
  border-bottom: 1px solid var(--soft-line);
}

.workspace {
  display: flex;
  flex: 1;
  min-height: 0;
}

/* ***** Shared dock parts ***** */
.dock-head {
  display: flex;
  align-items: center;
  justify-content: space-between;
  height: 20px;
  padding: 0 1px;
  border-bottom: 1px solid var(--soft-line);
  background: var(--bar);
}

.dock-head.right {
  justify-content: flex-end;
}

.chev {
  width: 11px;
  height: 14px;
}

.chev.flip {
  transform: scaleX(-1);
}

.chev.one {
  width: 7px;
}

.tabs {
  display: flex;
  flex: none;
  height: 17px;
  margin: 1px 0 5px;
  border: 1px solid var(--soft-line);
  background: var(--bar);
}

.tab-menu {
  width: 18px;
  border-right: 1px solid var(--soft-line);
}

.tab-menu svg {
  width: 17px;
  height: 15px;
}

.tab {
  display: flex;
  justify-content: center;
  width: 28px;
  height: 15px;
  padding-top: 1px;
  overflow: hidden;
  border: 1px solid #b4b5bb;
  border-width: 1px 1px 0 0;
  background: #d4d5da;
  color: #999;
}

.tab svg {
  width: 16px;
  height: 14px;
}

.tab.active {
  gap: 4px;
  width: auto;
  height: 20px;
  padding: 0 5px 0 4px;
  overflow: visible;
  background: var(--bg);
  color: #444;
  font-size: 10px;
  line-height: 21px;
  white-space: nowrap;
  font-feature-settings: "palt";
}

.tab.active svg {
  width: 18px;
  height: 18px;
}

.tab.icon-only {
  flex: 1;
  padding: 0;
  border-right: 0;
}

.panel {
  display: flex;
  flex-direction: column;
  min-height: 0;
  border-bottom: 1px solid var(--soft-line);
}

.scroll-box {
  display: flex;
  flex: 1;
  min-height: 0;
  border: 1px solid var(--line);
  border-top: 1px solid #7c8088;
}

.rows {
  flex: 1;
}

.scrollbar {
  width: 13px;
  border-top: 2px solid #a8a9ae;
  border-left: 2px solid #bcbdc2;
  background: #d7d8dd;
}

.panel-foot {
  display: flex;
  gap: 3px;
  justify-content: flex-end;
  height: 21px;
  padding: 1px 2px 2px 0;
  color: #555;
}

.panel-foot svg {
  width: 17px;
  height: 18px;
}

.combo {
  display: grid;
  align-items: center;
  height: 20px;
  border: 1px solid #c0c1c6;
  border-radius: 3px;
  color: var(--dim);
}

.combo select {
  grid-area: 1 / 1;
  width: 100%;
  appearance: none;
}

.combo svg {
  grid-area: 1 / 1;
  justify-self: end;
  width: 9px;
  height: 5px;
  margin-right: 2px;
  pointer-events: none;
}

/* ***** Toolbox ***** */
.toolbox {
  width: 42px;
  border-left: 1px solid #dcdde1;
  border-right: 1px solid #cfd0d4;
}

.tool-list {
  display: flex;
  flex-direction: column;
  align-items: center;
  border: 1px solid var(--line);
}

.tool-list button {
  display: grid;
  place-items: center;
  width: 25px;
  height: 26px;
}

.tool-list svg {
  width: 20px;
  height: 20px;
}

.tool-list .selected {
  border: 1px solid #9db8cf;
  border-radius: 2px;
  background: var(--select);
}

.tool-list .letter {
  font: bold 24px/26px "Liberation Serif", serif;
  color: #333;
}

.swatches {
  display: grid;
  grid-template: 14px 11px 14px / 14px 10px 14px;
  padding: 1px;
}

.swatches .sub {
  grid-area: 2 / 2 / 4 / 4;
  border: 1px solid #aaa;
  background: #fff;
}

.swatches .main {
  grid-area: 1 / 1 / 3 / 3;
  z-index: 1;
  border: 2px solid #7abde0;
  outline: 1px solid #fff;
  outline-offset: -4px;
  background: #000;
}

.swatches .clear {
  grid-column: 1 / 4;
  height: 11px;
  margin-top: 1px;
  border: 1px solid #aaa;
  background: repeating-conic-gradient(#fff 0 25%, #858585 0 50%) 0 0 / 10px 10px;
}

/* ***** Left dock ***** */
.left-dock {
  display: grid;
  grid-template-rows: 20px 516fr 290fr auto;
  width: 210px;
  border-left: 1px solid var(--line);
  border-right: 2px solid var(--soft-line);
}

.group-row {
  height: 28px;
  border: 1px solid var(--line);
  border-bottom: 1px solid #d0d1d6;
}

.group {
  display: flex;
  gap: 5px;
  align-items: center;
  width: 84px;
  height: 25px;
  padding-left: 3px;
  border: 1px solid #9db4c6;
  border-radius: 2px;
  background: var(--select);
  font-family: Roboto, sans-serif;
}

.group svg, .row svg {
  width: 19px;
  height: 19px;
}

.row {
  display: flex;
  justify-content: space-between;
  width: 100%;
  height: 36px;
  padding: 3px 1px 1px 2px;
  border: 1px solid var(--line);
  border-width: 0 1px 1px 0;
  font-family: Roboto, sans-serif;
}

.row span {
  align-self: flex-end;
}

.row.selected {
  border: 1px solid #9db4c6;
  border-radius: 2px;
  background: var(--select);
}

.row.selected span {
  padding-left: 8px;
  background: #d6e6f1;
}

.prop-name {
  display: flex;
  justify-content: space-between;
  height: 39px;
  padding: 0 3px;
  border: 1px solid var(--line);
  border-bottom: 0;
  font-family: Roboto, sans-serif;
}

.prop-name button {
  align-self: flex-end;
  width: 17px;
  height: 20px;
}

.prop-name svg {
  width: 17px;
  height: 17px;
}

fieldset {
  margin: 6px 3px 0 4px;
  padding: 4px 0 0;
  border: 0;
  border-top: 1px solid #d4d6db;
}

legend {
  margin-left: 4px;
  padding: 0 3px;
}

fieldset .combo {
  margin-left: 12px;
  border-color: #aeb0b5;
  background: linear-gradient(#f6f8fb, #e9ebef);
  color: #555;
}

fieldset select {
  padding-right: 10px;
  color: #111;
  font-size: 11px;
  text-align: center;
  text-align-last: center;
  font-feature-settings: "palt";
}

/* ***** Colour wheel ***** */
.color .tabs {
  margin-bottom: 0;
}

.color .faded {
  justify-content: flex-start;
  width: 49px;
  padding-right: 0;
}

.faded span {
  background: linear-gradient(to right, #444 50%, #c8cad0);
  background-clip: text;
  color: transparent;
}

.color .tab:not(.active) {
  flex: 1;
}

.color-body {
  display: flex;
  height: 145px;
}

.color-area {
  display: flex;
  flex: 1;
  flex-direction: column;
  justify-content: space-between;
  padding-top: 10px;
}

.wheel {
  display: grid;
  place-items: center;
  width: 114px;
  height: 114px;
  margin-left: 42px;
  border-radius: 50%;
  background: conic-gradient(#ff0, #0f0 60deg, #0ff 120deg, #00f 180deg, #f0f 240deg, #f00 300deg, #ff0);
}

.wheel > * {
  grid-area: 1 / 1;
}

.wheel svg {
  width: 116px;
  height: 116px;
}

.hole {
  display: grid;
  place-items: center;
  width: 88px;
  height: 88px;
  border-radius: 50%;
  background: var(--bg);
}

.sv {
  width: 58px;
  height: 58px;
  border: 1px solid #999;
  background: linear-gradient(transparent, #000), linear-gradient(to right, #fff, #f00);
}

.color-bottom {
  display: flex;
  gap: 14px;
  align-items: flex-end;
  height: 52px;
  margin-top: -34px;
  padding-right: 4px;
}

.swatches.small {
  grid-template: 13px 9px 13px / 13px 9px 13px;
  margin-right: auto;
  padding: 0 0 3px;
}

.hsv {
  display: flex;
  gap: 6px;
  padding-bottom: 2px;
}

.hsv label {
  display: flex;
  align-items: center;
}

.hsv b {
  width: 9px;
  background: #0a0a3c;
  color: #fff;
  font: bold 8px/9px "Liberation Sans", sans-serif;
  text-align: center;
}

.hsv input {
  width: 17px;
  height: 14px;
  font-family: Roboto, sans-serif;
  text-align: right;
}

.mode {
  display: grid;
  place-items: center;
  width: 17px;
  height: 17px;
  margin-bottom: 4px;
  border-radius: 50%;
  background: radial-gradient(#fff 5px, transparent 6px), conic-gradient(#cc0, #2b4, #0bc, #33c, #a2a, #d22, #e82, #cc0);
}

.mode svg {
  width: 9px;
  height: 9px;
}

.grip {
  width: 10px;
  background: repeating-linear-gradient(to right, #a8aab0 0 1px, #dcdde2 1px 3px);
}

/* ***** Canvas ***** */
main {
  display: flex;
  flex: 1;
  flex-direction: column;
  min-width: 0;
}

.commandbar {
  display: flex;
  align-items: center;
  height: 26px;
  padding-left: 2px;
  border-bottom: 1px solid var(--soft-line);
  color: var(--dim);
}

.commandbar button {
  display: grid;
  place-items: center;
  width: 24px;
  height: 22px;
}

.commandbar svg {
  width: 18px;
  height: 18px;
}

.commandbar i {
  width: 2px;
  height: 20px;
  margin: 0 3px;
  background: #d4d5d9;
}

.commandbar .clip-btn {
  width: 40px;
  height: 20px;
  margin-right: 4px;
  border: 1px solid #b0b1b5;
  border-radius: 3px;
}

.commandbar .clip-btn svg {
  width: 34px;
  height: 16px;
}

.commandbar .drop {
  width: 14px;
  color: #555;
}

.commandbar .drop svg {
  width: 9px;
  height: 5px;
}

.commandbar .home {
  width: 77px;
  height: 20px;
  border: 1px solid #a9a9ac;
  border-radius: 2px;
  background: #ececee;
  color: #777;
  font-size: 9px;
  font-family: "Liberation Sans", "Noto Sans CJK JP", sans-serif;
  white-space: nowrap;
  font-feature-settings: "palt";
}

.doc-tabs {
  display: flex;
  justify-content: flex-end;
  height: 19px;
  border-bottom: 1px solid var(--line);
  background: #e8e8ea;
}

.doc-tabs button {
  display: grid;
  place-items: center;
  width: 12px;
  border: 1px solid var(--soft-line);
  border-radius: 3px;
  background: var(--bg);
  color: #aaa;
}

.doc-tabs svg {
  width: 5px;
  height: 3px;
}

.canvas {
  flex: 1;
  border-left: 1px solid var(--line);
  border-bottom: 1px solid var(--line);
}

/* ***** Materials ***** */
.materials {
  width: 42px;
  border-left: 2px solid var(--line);
  background: linear-gradient(to right, #dddde0, #ebebed);
}

.materials .dock-head {
  padding: 0 5px 0 0;
}

.material-list {
  display: flex;
  flex-direction: column;
  gap: 4px;
  padding: 2px 4px 0 2px;
}

.material-list button {
  display: grid;
  height: 40px;
  padding: 8px 5px 8px 3px;
  border: 1px solid var(--line);
  background: var(--bg);
}

.material-list svg {
  grid-area: 1 / 1;
  width: 18px;
  height: 16px;
}

.material-list .badge {
  align-self: end;
  justify-self: end;
  width: 16px;
  height: 16px;
}

/* ***** Right dock ***** */
.right-dock {
  display: flex;
  flex-direction: column;
  width: 209px;
  border-right: 2px solid var(--soft-line);
}

.right-dock .panel {
  padding-right: 2px;
}

.preview {
  height: 113px;
  border: 1px solid var(--line);
  border-top-color: #7c8088;
}

.nav-controls {
  display: grid;
  grid-template-columns: 95px repeat(3, 20px) 4px repeat(2, 20px);
  gap: 2px 0;
  align-items: center;
  height: 43px;
  padding: 2px 0 1px 5px;
  color: var(--dim);
}

.nav-controls button {
  display: grid;
  place-items: center;
}

.nav-controls button svg {
  width: 17px;
  height: 17px;
}

.nav-controls i {
  width: 1px;
  height: 15px;
  margin-left: 2px;
  background: #ccc;
}

input[type=range] {
  appearance: none;
}

input[type=range]::-webkit-slider-thumb {
  opacity: 0;
}

.zoom-range, .angle {
  width: 90px;
  height: 12px;
  border: 1px solid #a4a6ab;
}

.zoom-range {
  background: linear-gradient(to bottom right, transparent 50%, #9ea1a6 50%);
}

.angle {
  display: grid;
}

.angle > * {
  grid-area: 1 / 1;
  width: 88px;
  height: 10px;
}

.layerprop {
  height: 140px;
}

.dark svg {
  color: #333;
}

.layer {
  flex: 1;
}

.blend {
  display: flex;
  gap: 7px;
  align-items: center;
  height: 20px;
  padding-left: 1px;
}

.combo.wide {
  width: 100px;
}

.opacity {
  width: 53px;
  height: 9px;
  border: 1px solid #a4a6ab;
}

.layer-opts {
  display: flex;
  gap: 1px;
  height: 24px;
  padding: 1px 0;
  color: var(--dim);
}

.layer-opts .combo {
  width: 37px;
}

.opts {
  display: flex;
  flex: 1;
  justify-content: flex-end;
  align-items: center;
}

.opts button {
  display: grid;
  justify-items: end;
  width: 20px;
}

.opts svg, .layer-foot svg {
  width: 18px;
  height: 17px;
}

.layers-box {
  padding-left: 3px;
}

.layers-box .rows {
  border-left: 1px solid var(--line);
}

.layer-foot {
  display: flex;
  align-items: center;
  height: 21px;
  color: var(--dim);
}

.layer-foot button {
  display: grid;
  place-items: center;
  width: 20px;
}

.layer-foot button:first-child {
  margin-right: auto;
}

/* ***** Taskbar ***** */
.taskbar {
  position: relative;
  display: flex;
  height: 40px;
  border-top: 1px solid #111;
  background:
    radial-gradient(ellipse 130px 60px at 110px 20px, #6a66c4, #5b4fa0 50%, transparent),
    linear-gradient(to right, #10151e, #241a2c 13%, #10151e 17%, #10151e 83%, #2f3c54 85%, #222b38 93%, #0c0e12 98%, #0c0e12);
  box-shadow: inset 0 1px 0 #78858f;
  color: #fff;
}

.wall {
  position: absolute;
  top: 1px;
  width: 100%;
  height: 38px;
}

.taskbar > :not(.wall) {
  position: relative;
}

.start {
  width: 54px;
  padding-left: 8px;
}

.start svg {
  width: 38px;
  height: 38px;
}

.tasks {
  display: flex;
  gap: 4px;
  flex: 1;
  padding: 1px 0 0 6px;
}

.tasks button {
  display: grid;
  place-items: center;
  width: 58px;
  height: 38px;
  border: 1px solid transparent;
  border-radius: 3px;
}

.tasks svg, .tasks b {
  grid-area: 1 / 1;
}

.tasks svg {
  width: 32px;
  height: 32px;
}

.tasks b {
  z-index: 1;
  font: bold 24px/32px "Liberation Sans", sans-serif;
}

.tasks .fz b {
  font-style: italic;
}

.tasks .open {
  border-color: #868e98;
  background: linear-gradient(135deg, rgba(255, 255, 255, .5), rgba(255, 255, 255, .15) 50%, rgba(255, 255, 255, .08));
}

.tasks .current {
  border-color: #e4f6fc;
  background: linear-gradient(135deg, #c2ccd6, #e4eef4 40%, #68b3d2);
}

.tray {
  display: flex;
  align-items: center;
  font-size: 11px;
}

.tray button {
  width: 24px;
}

.tray svg {
  width: 16px;
  height: 16px;
  margin: auto;
}

.tray .up {
  width: 7px;
  height: 5px;
}

.tray .lang {
  margin-right: 4px;
}

.clock {
  display: flex;
  flex-direction: column;
  width: 72px;
  text-align: center;
}

.tray .show-desktop {
  width: 14px;
  height: 37px;
  border: 1px solid #6c737b;
  background: linear-gradient(135deg, #555c64, #14171b 60%);
}
```
